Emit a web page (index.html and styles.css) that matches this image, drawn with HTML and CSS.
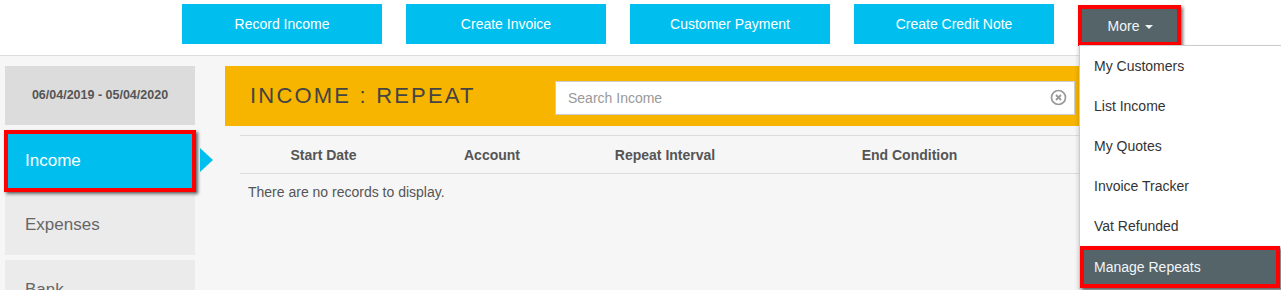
FILE: index.html
```html
<!DOCTYPE html>
<html>
<head>
  <title>Income : Repeat</title>
  <link rel="stylesheet" href="styles.css">
</head>
<body>
  <div class="top-bar">
    <button class="action-btn">Record Income</button>
    <button class="action-btn">Create Invoice</button>
    <button class="action-btn">Customer Payment</button>
    <button class="action-btn">Create Credit Note</button>
    <div class="more-wrap">
      <button class="more-btn">More <span class="caret"></span></button>
      <ul class="more-menu">
        <li>My Customers</li>
        <li>List Income</li>
        <li>My Quotes</li>
        <li>Invoice Tracker</li>
        <li>Vat Refunded</li>
        <li class="active">Manage Repeats</li>
      </ul>
    </div>
  </div>

  <div class="layout">
    <div class="sidebar">
      <div class="period">06/04/2019 - 05/04/2020</div>
      <div class="side-item active">Income</div>
      <div class="side-item">Expenses</div>
      <div class="side-item">Bank</div>
    </div>

    <div class="main">
      <div class="page-head">
        <h1>INCOME : REPEAT</h1>
        <div class="search">
          <input type="text" placeholder="Search Income">
          <svg class="clear-icon" width="17" height="17" viewBox="0 0 17 17">
            <circle cx="8.5" cy="8.5" r="7" fill="none" stroke="#999" stroke-width="1.7"/>
            <path d="M6 6 L11 11 M11 6 L6 11" stroke="#999" stroke-width="1.9"/>
          </svg>
        </div>
      </div>

      <div class="grid">
        <div class="grid-head">
          <div>Start Date</div>
          <div>Account</div>
          <div>Repeat Interval</div>
          <div>End Condition</div>
          <div></div>
        </div>
        <div class="grid-empty">There are no records to display.</div>
      </div>
    </div>
  </div>
</body>
</html>
```

FILE: styles.css
```css
body {
  margin: 0;
  font-family: "Liberation Sans", Arial, sans-serif;
  background-color: #f6f6f6;
  overflow: hidden;
}

.top-bar {
  height: 56px;
  background-color: #fff;
  border-bottom: 1px solid #ddd;
  display: flex;
  align-items: flex-start;
  gap: 24px;
  padding: 4px 0 0 182px;
  box-sizing: border-box;
}

.action-btn {
  width: 200px;
  height: 40px;
  border: none;
  background-color: #00bfee;
  color: #fff;
  font-family: inherit;
  font-size: 14px;
  padding: 0;
}

.more-wrap {
  position: relative;
}

.more-btn {
  margin-top: 1px;
  width: 103px;
  height: 41px;
  border: 4px solid #f00;
  background-color: #546469;
  color: #f2f6f8;
  font-family: inherit;
  font-size: 14px;
  padding: 0 0 0 2px;
  box-shadow: 2px 2px 3px rgba(0, 0, 0, 0.55);
}

.caret {
  display: inline-block;
  width: 0;
  height: 0;
  border-top: 4px solid #f2f6f8;
  border-left: 4px solid transparent;
  border-right: 4px solid transparent;
  vertical-align: middle;
  margin-left: 2px;
}

.more-menu {
  position: absolute;
  top: 41px;
  left: 1px;
  width: 220px;
  margin: 0;
  padding: 0;
  list-style: none;
  background-color: #fff;
  border: 1px solid #ccc;
  box-shadow: -1px 2px 4px rgba(0, 0, 0, 0.15);
  z-index: 10;
}

.more-menu li {
  height: 40px;
  line-height: 40px;
  padding-left: 14px;
  font-size: 14px;
  color: #333;
}

.more-menu li.active {
  width: 200px;
  height: 42px;
  line-height: 34px;
  box-sizing: border-box;
  border: 4px solid #f00;
  padding-left: 10px;
  background-color: #546469;
  color: #f2f6f8;
  box-shadow: 2px 2px 3px rgba(0, 0, 0, 0.55);
}

.layout {
  display: flex;
  gap: 30px;
  padding: 10px 5px 0 5px;
}

.sidebar {
  width: 190px;
  flex-shrink: 0;
}

.period {
  height: 59px;
  line-height: 59px;
  background-color: #dcdcdc;
  color: #555;
  font-size: 12.5px;
  font-weight: bold;
  text-align: center;
  margin-bottom: 5px;
}

.side-item {
  height: 60px;
  line-height: 60px;
  background-color: #ebebeb;
  color: #666;
  font-size: 17px;
  padding-left: 20px;
  margin-bottom: 5px;
}

.side-item.active {
  position: relative;
  width: 192px;
  height: 62px;
  line-height: 54px;
  box-sizing: border-box;
  margin: 0 0 3px -1px;
  padding-left: 17px;
  border: 4px solid #f00;
  background-color: #00bfee;
  color: #fff;
  box-shadow: 2px 2px 3px rgba(0, 0, 0, 0.6);
}

.side-item.active::after {
  content: "";
  position: absolute;
  left: 192px;
  top: 14px;
  border-left: 13px solid #00bfee;
  border-top: 12px solid transparent;
  border-bottom: 12px solid transparent;
}

.main {
  flex: 1;
}

.page-head {
  height: 60px;
  background-color: #f7b500;
  display: flex;
  align-items: center;
}

.page-head h1 {
  width: 305px;
  margin: 0;
  padding-left: 25px;
  font-size: 22px;
  font-weight: normal;
  letter-spacing: 2.2px;
  color: #444;
}

.search {
  position: relative;
  width: 520px;
  margin-top: 3px;
}

.search input {
  width: 100%;
  height: 34px;
  box-sizing: border-box;
  border: 1px solid #ccc;
  padding: 0 12px;
  font-family: inherit;
  font-size: 14px;
  color: #333;
}

.search input::placeholder {
  color: #999;
}

.clear-icon {
  position: absolute;
  right: 8px;
  top: 8px;
}

.grid {
  margin: 9px 15px 0 15px;
}

.grid-head {
  display: grid;
  grid-template-columns: 167px 170px 176px 313px 1fr;
  height: 37px;
  align-items: center;
  border-top: 1px solid #ddd;
  border-bottom: 1px solid #ddd;
  font-size: 14px;
  font-weight: bold;
  color: #555;
  text-align: center;
}

.grid-empty {
  padding: 10px 8px;
  font-size: 14px;
  color: #555;
}
```
